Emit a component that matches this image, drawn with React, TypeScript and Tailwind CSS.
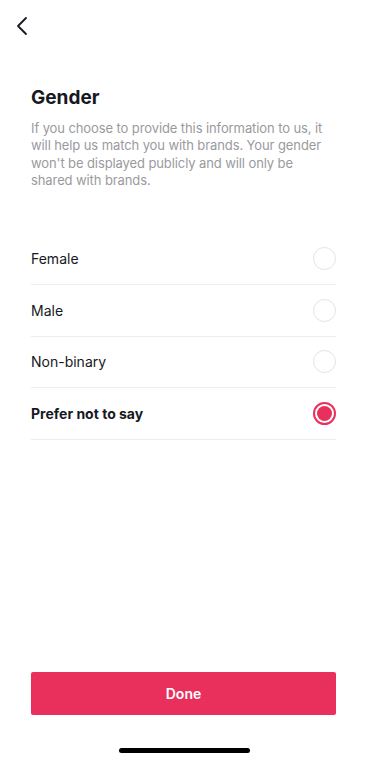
import { useState } from 'react';

const options = ['Female', 'Male', 'Non-binary', 'Prefer not to say'];

function Radio({ checked }: { checked: boolean }) {
  if (checked) {
    return (
      <div className="w-[23px] h-[23px] rounded-full border-2 border-[#e9305c] flex items-center justify-center">
        <div className="w-[15px] h-[15px] rounded-full bg-[#e9305c]" />
      </div>
    );
  }
  return <div className="w-[23px] h-[23px] rounded-full border-[1.5px] border-[#e3e3e3]" />;
}

export default function App() {
  const [selected, setSelected] = useState('Prefer not to say');

  return (
    <div
      className="w-[369px] h-[765px] bg-white flex flex-col relative"
      style={{ fontFamily: 'Inter, "Open Sans", Arial, sans-serif' }}
    >
      <div className="h-[52px] flex items-center pl-[14px]">
        <svg width="16" height="20" viewBox="0 0 16 20" fill="none">
          <path d="M12 2 L4 10 L12 18" stroke="#161823" strokeWidth="1.8" strokeLinecap="round" strokeLinejoin="round" />
        </svg>
      </div>

      <div className="pl-[31px] pr-[33px] pt-[34px]">
        <h1 className="text-[19px] font-bold text-[#161823] leading-[24px]">Gender</h1>
        <p className="mt-[10px] w-[296px] text-[13px] leading-[17.3px] text-[#9a9a9e] tracking-[-0.1px]">
          If you choose to provide this information to us, it will help us match you with brands. Your gender won't be
          displayed publicly and will only be shared with brands.
        </p>

        <div className="mt-[44px]">
          {options.map((o) => (
            <button
              key={o}
              onClick={() => setSelected(o)}
              className="w-full h-[51.7px] flex items-center justify-between border-b border-[#ececec] text-left"
            >
              <span
                className={
                  selected === o
                    ? 'text-[14px] font-bold text-[#161823]'
                    : 'text-[14px] text-[#161823]'
                }
              >
                {o}
              </span>
              <Radio checked={selected === o} />
            </button>
          ))}
        </div>
      </div>

      <div className="flex-1" />

      <div className="pl-[31px] pr-[33px]">
        <button className="w-full h-[43px] rounded-[2px] bg-[#e9305c] text-white text-[14px] font-semibold">
          Done
        </button>
      </div>

      <div className="h-[50px] flex items-center justify-center">
        <div className="w-[131px] h-[5px] rounded-full bg-black mt-[20px]" />
      </div>
    </div>
  );
}
